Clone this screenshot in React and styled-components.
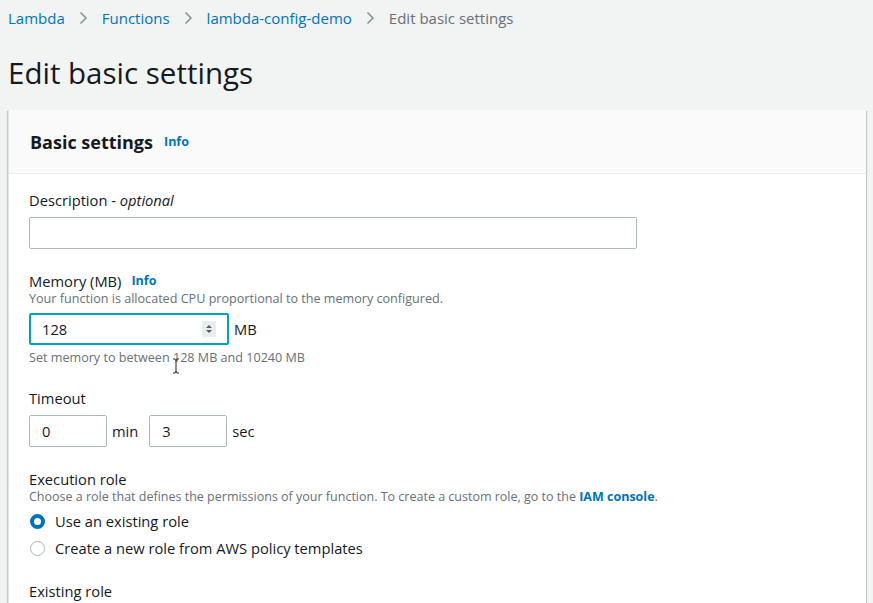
import React from "react";
import styled, { createGlobalStyle } from "styled-components";

const Global = createGlobalStyle`
  html, body { margin: 0; padding: 0; background: #f2f3f3; }
  body { font-family: "Open Sans", "Noto Sans", sans-serif; color: #16191f; -webkit-font-smoothing: antialiased; }
  * { box-sizing: border-box; }
`;

const Page = styled.div`
  padding: 0 7px 0 8px;
  height: 603px;
  overflow: hidden;
`;

const Crumbs = styled.nav`
  display: flex;
  align-items: center;
  height: 36px;
  font-size: 15px;
`;

const Crumb = styled.span`
  color: ${(p) => (p.$current ? "#687078" : "#0073bb")};
`;

const Sep = styled.span`
  display: inline-flex;
  margin: 0 14px;
  color: #879596;
`;

const Title = styled.h1`
  margin: 0;
  padding: 20px 0 0;
  font-size: 29.5px;
  font-weight: 400;
  height: 74px;
  line-height: 34px;
`;

const Card = styled.section`
  background: #fff;
  border-left: 1px solid #e4e6e6;
  box-shadow: 0 1px 1px 0 rgba(0, 28, 36, 0.3), 1px 1px 1px 0 rgba(0, 28, 36, 0.15), -1px 1px 1px 0 rgba(0, 28, 36, 0.15);
`;

const CardHeader = styled.div`
  background: #fafafa;
  border-bottom: 1px solid #eaeded;
  height: 64px;
  display: flex;
  align-items: center;
  padding: 0 21px;
  gap: 11px;
`;

const CardTitle = styled.h2`
  margin: 0;
  font-size: 18px;
  font-weight: 700;
`;

const InfoLink = styled.span`
  color: #0073bb;
  font-weight: 700;
  font-size: 12.5px;
`;

const CardBody = styled.div`
  padding: 16px 20px 60px 20px;
`;

const Field = styled.div`
  display: flex;
  flex-direction: column;
  margin-bottom: ${(p) => p.$mb || 20}px;
`;

const Label = styled.div`
  display: flex;
  align-items: center;
  gap: 10px;
  font-size: 14.7px;
  line-height: 20px;
  color: #16191f;
  em { font-style: italic; }
`;

const Help = styled.div`
  font-size: ${(p) => p.$fs || 12.6}px;
  line-height: 16px;
  color: #687078;
  margin-top: ${(p) => p.$mt || 0}px;
  a { color: #0073bb; font-weight: 700; text-decoration: none; }
`;

const Row = styled.div`
  display: flex;
  align-items: center;
  gap: 5px;
  margin-top: ${(p) => p.$mt || 0}px;
`;

const Input = styled.div`
  width: ${(p) => p.$w}px;
  height: 32px;
  border: ${(p) => (p.$focus ? "2px solid #00a1c9" : "1px solid #aab7b8")};
  border-radius: 2px;
  background: #fff;
  display: flex;
  align-items: center;
  justify-content: space-between;
  padding: 0 ${(p) => (p.$focus ? 11 : 12)}px;
  font-size: 14.7px;
  color: #16191f;
`;

const Unit = styled.span`
  font-size: 14.7px;
  margin-right: ${(p) => p.$mr || 0}px;
`;

const Spinner = styled.span`
  display: inline-flex;
  width: 14px;
  height: 16px;
  background: #eaeded;
  align-items: center;
  justify-content: center;
`;

const Radios = styled.div`
  display: flex;
  flex-direction: column;
  gap: 7px;
  margin-top: 6px;
`;

const RadioRow = styled.label`
  display: flex;
  align-items: center;
  gap: 10px;
  font-size: 14.7px;
  line-height: 20px;
`;

const RadioDot = styled.span`
  width: 15px;
  height: 15px;
  border-radius: 50%;
  margin-left: 1px;
  border: ${(p) => (p.$on ? "4px solid #0073bb" : "1.5px solid #aab7b8")};
  background: #fff;
`;

const Cursor = styled.span`
  position: relative;
  display: inline-block;
  width: 0;
  svg { position: absolute; left: -1px; top: -4px; }
`;

const Chevron = () => (
  <svg width="9" height="14" viewBox="0 0 9 14" fill="none">
    <path d="M1.5 1.5 L7 7 L1.5 12.5" stroke="currentColor" strokeWidth="1.6" />
  </svg>
);

export default function App() {
  return (
    <>
      <Global />
      <Page>
        <Crumbs>
          <Crumb>Lambda</Crumb>
          <Sep><Chevron /></Sep>
          <Crumb>Functions</Crumb>
          <Sep><Chevron /></Sep>
          <Crumb>lambda-config-demo</Crumb>
          <Sep><Chevron /></Sep>
          <Crumb $current>Edit basic settings</Crumb>
        </Crumbs>
        <Title>Edit basic settings</Title>
        <Card>
          <CardHeader>
            <CardTitle>Basic settings</CardTitle>
            <InfoLink>Info</InfoLink>
          </CardHeader>
          <CardBody>
            <Field $mb={22}>
              <Label><span>Description - <em>optional</em></span></Label>
              <Row $mt={7}>
                <Input $w={608} />
              </Row>
            </Field>
            <Field $mb={22}>
              <Label>Memory (MB) <InfoLink>Info</InfoLink></Label>
              <Help>Your function is allocated CPU proportional to the memory configured.</Help>
              <Row $mt={6}>
                <Input $w={200} $focus>
                  <span>128</span>
                  <Spinner>
                    <svg width="8" height="10" viewBox="0 0 8 10">
                      <path d="M1 4 L4 1 L7 4 Z M1 6 L4 9 L7 6 Z" fill="#545b64" />
                    </svg>
                  </Spinner>
                </Input>
                <Unit>MB</Unit>
              </Row>
              <Help $mt={5}>
                Set memory to between{" "}
                <Cursor>
                  <svg width="8" height="16" viewBox="0 0 8 16">
                    <path d="M1 1 H3 Q4 1 4 3 V13 Q4 15 3 15 H1 M7 1 H5 Q4 1 4 3 M4 13 Q4 15 5 15 H7" stroke="#222" strokeWidth="1" fill="none" />
                  </svg>
                </Cursor>
                128 MB and 10240 MB
              </Help>
            </Field>
            <Field $mb={22}>
              <Label>Timeout</Label>
              <Row $mt={7}>
                <Input $w={78}><span>0</span></Input>
                <Unit $mr={6}>min</Unit>
                <Input $w={78}><span>3</span></Input>
                <Unit>sec</Unit>
              </Row>
            </Field>
            <Field $mb={23}>
              <Label>Execution role</Label>
              <Help $fs={12.5}>
                Choose a role that defines the permissions of your function. To create a custom role, go to the <a>IAM console</a>.
              </Help>
              <Radios>
                <RadioRow><RadioDot $on /> Use an existing role</RadioRow>
                <RadioRow><RadioDot /> Create a new role from AWS policy templates</RadioRow>
              </Radios>
            </Field>
            <Field>
              <Label>Existing role</Label>
            </Field>
          </CardBody>
        </Card>
      </Page>
    </>
  );
}
